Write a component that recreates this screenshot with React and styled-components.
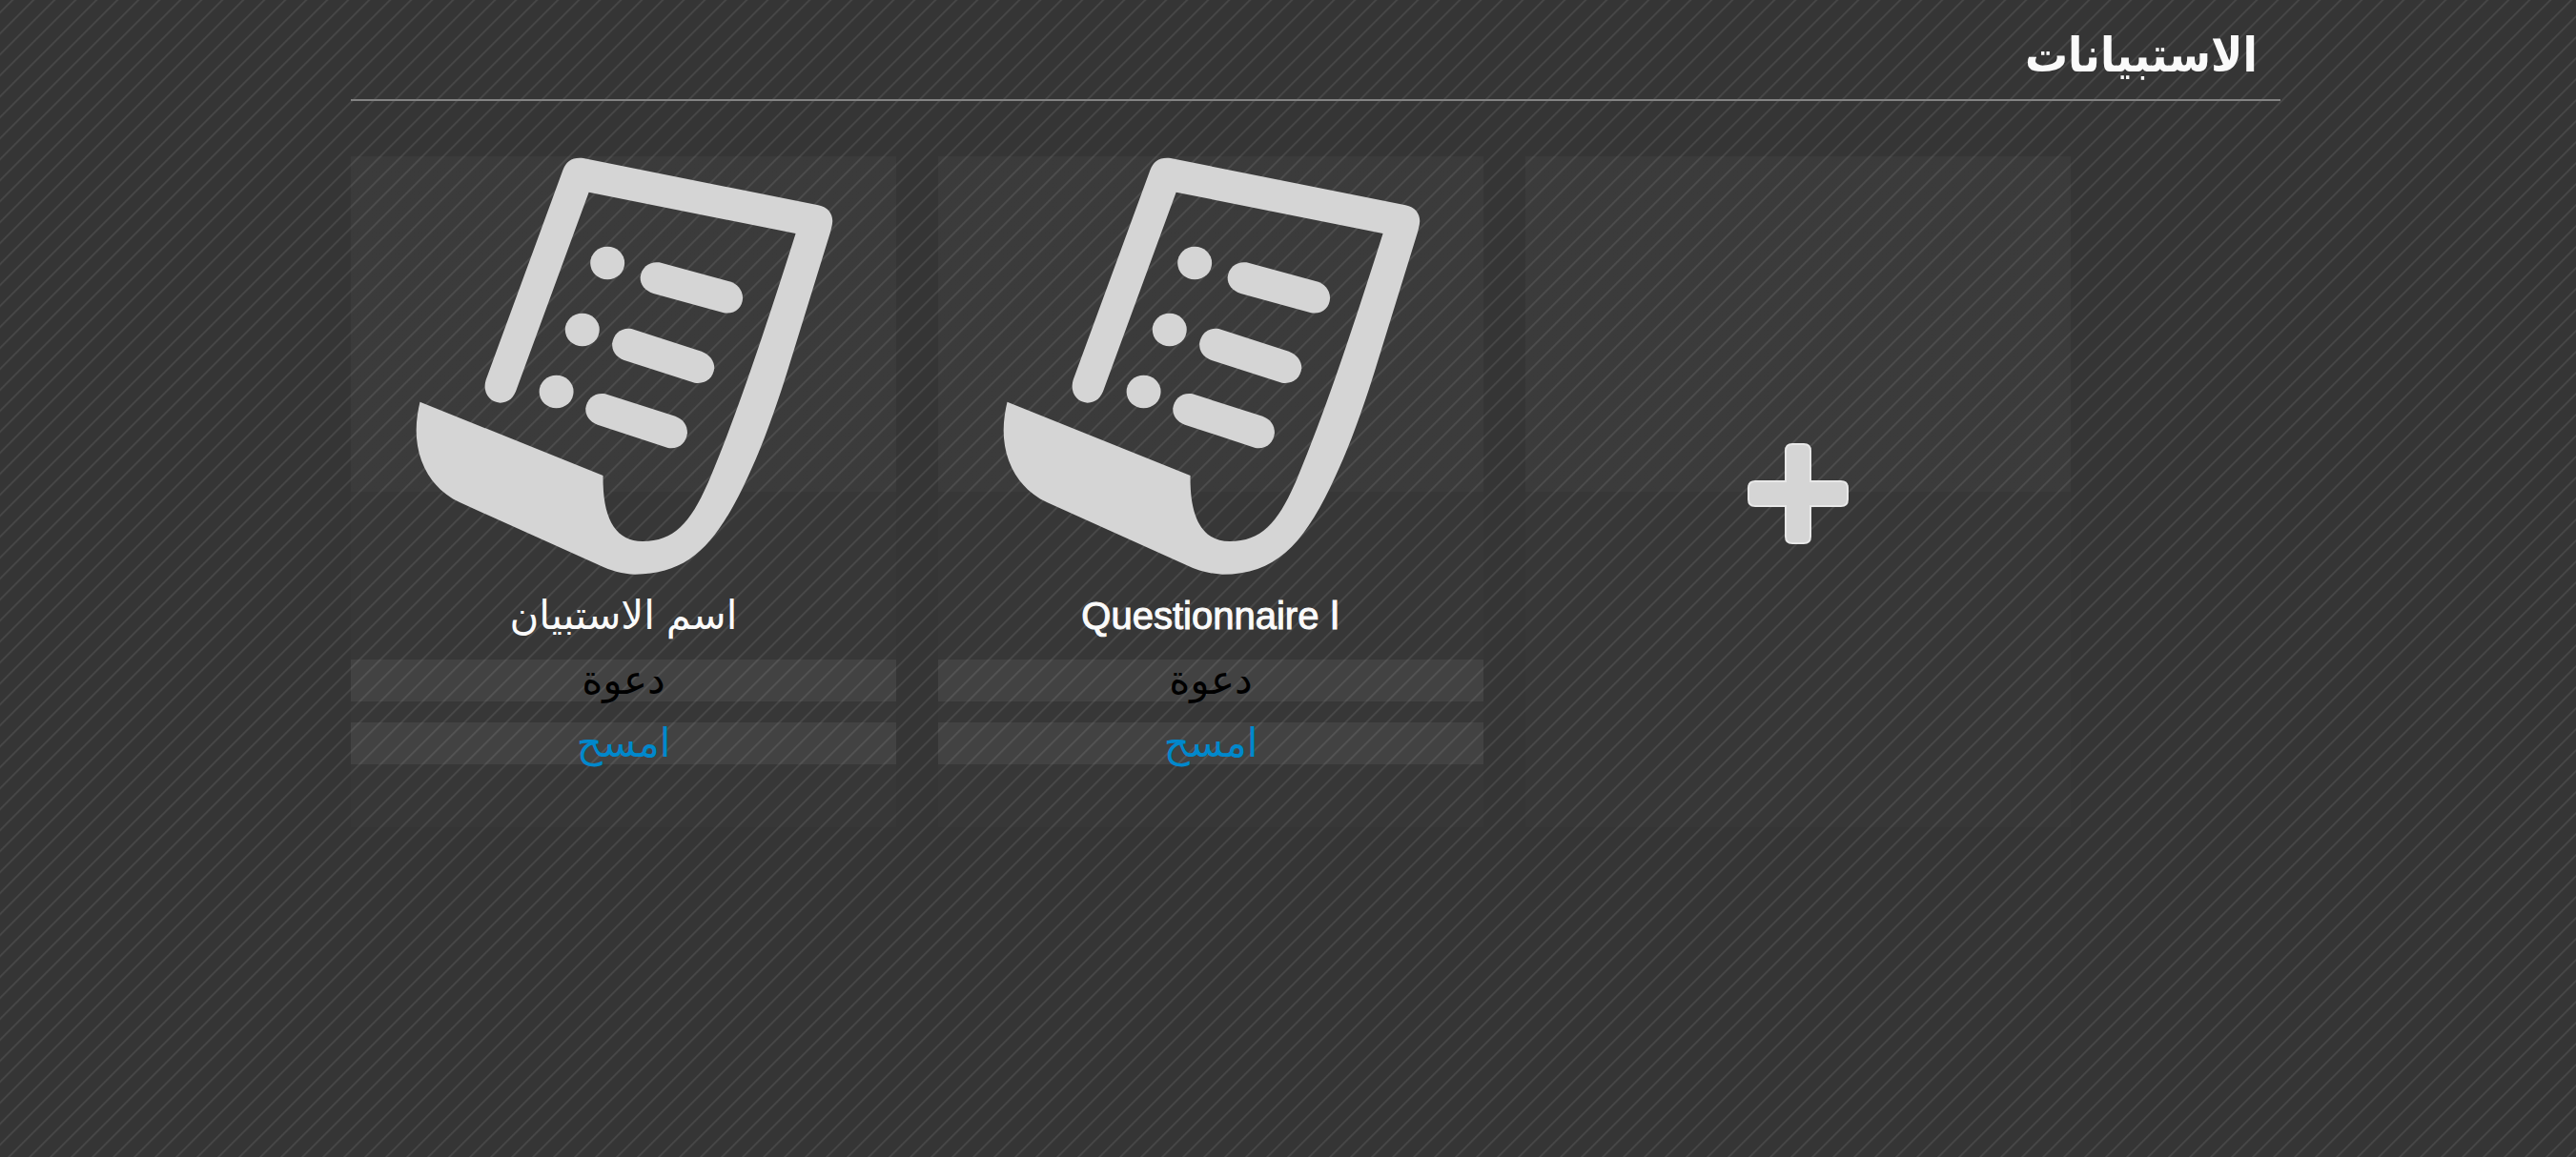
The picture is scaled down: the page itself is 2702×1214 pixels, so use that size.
import React from "react";
import styled, { createGlobalStyle } from "styled-components";

const GlobalStyle = createGlobalStyle`
  * { box-sizing: border-box; }

  body {
    margin: 0;
    min-height: 100vh;
    color: #fafafa;
    font-family: "Liberation Sans", "DejaVu Sans", sans-serif;
    background-color: #353535;
    background-image: linear-gradient(
      135deg,
      #353535 25%, #474747 29%, #474747 31%, #353535 35%,
      #353535 75%, #474747 79%, #474747 81%, #353535 85%
    );
    background-size: 22px 22px;
  }
`;

const Page = styled.div`
  padding: 0 310px 0 368px;
`;

const Header = styled.header`
  display: flex;
  align-items: flex-end;
  justify-content: flex-end;
  height: 106px;
  padding-right: 24px;
  border-bottom: 2px solid #838383;
`;

const Heading = styled.h1`
  margin: 0;
  font-family: "DejaVu Sans Condensed", "DejaVu Sans", sans-serif;
  font-size: 50px;
  font-weight: 700;
  line-height: 92px;
  white-space: nowrap;
`;

const Cards = styled.main`
  display: grid;
  grid-template-columns: repeat(auto-fill, 572px);
  gap: 44px;
  padding: 58px 0;
`;

const Card = styled.article`
  display: flex;
  flex-direction: column;
  height: 704px;
  background-color: rgba(255, 255, 255, 0.01);
  background-image: linear-gradient(rgba(255, 255, 255, 0.02), rgba(255, 255, 255, 0.02));
  background-size: 100% 50%;
  background-repeat: no-repeat;
`;

const Sheet = styled.svg`
  display: block;
  width: 440px;
  height: 440px;
  margin: 0 auto;
  fill: #d5d5d5;
`;

const Title = styled.h2`
  margin: 0;
  padding-bottom: 4px;
  font-family: "Liberation Sans", "DejaVu Sans", sans-serif;
  font-size: ${(p) => (p.$latin ? "40px" : "42px")};
  font-weight: 400;
  line-height: 84px;
  text-align: center;
  -webkit-text-stroke: ${(p) => (p.$latin ? "1px" : "0")} #fafafa;
`;

const Actions = styled.div`
  display: flex;
  flex-direction: column;
  gap: 22px;
`;

const Action = styled.button`
  height: 44px;
  padding: 0;
  border: 0;
  background: rgba(255, 255, 255, 0.06);
  color: ${(p) => (p.$danger ? "#0088cc" : "#000000")};
  font-family: "DejaVu Sans", sans-serif;
  font-size: 42px;
  line-height: 40px;
  cursor: pointer;
`;

const AddButton = styled.button`
  display: flex;
  flex: 1;
  align-items: center;
  justify-content: center;
  padding: 4px 0 0;
  border: 0;
  background: none;
  cursor: pointer;
`;

const Plus = styled.svg`
  width: 108px;
  height: 108px;
  fill: #d5d5d5;
  stroke: #e8e8e8;
  stroke-width: 2;
`;

function SheetIcon() {
  return (
    <Sheet viewBox="193 42 1150 1320" preserveAspectRatio="none" aria-hidden="true">
      <path d="M602 85C611 57 628 44 658 48L1302 196C1328 202 1341 222 1341 246C1340 262 1337 272 1334 285L1225 690C1180 858 1142 975 1095 1085C1018 1265 945 1358 800 1358C765 1356 735 1347 700 1328L320 1132C240 1090 200 1000 200 905C200 870 205 840 210 815L712 1047C710 1180 745 1254 820 1254C910 1254 955 1190 1004 1058C1080 850 1150 610 1240 285L673 155L476 772C468 802 453 818 430 818C405 816 388 795 388 765C389 750 392 742 395 733Z" />
      <ellipse cx="724" cy="378" rx="47" ry="52" />
      <ellipse cx="655" cy="588" rx="47" ry="52" />
      <ellipse cx="584" cy="783" rx="47" ry="52" />
      <path d="M1058 436C1080 443 1094 462 1095 488C1094 517 1074 540 1043 535L850 474C826 464 814 447 814 423C817 392 838 372 866 376Z" />
      <path d="M982 656C1004 666 1017 685 1017 709C1014 740 994 760 963 755L768 683C746 673 736 654 737 631C741 600 762 580 790 585Z" />
      <path d="M910 860C932 870 943 888 943 913C940 945 920 965 890 960L697 887C674 877 664 858 664 836C668 804 689 785 718 790Z" />
    </Sheet>
  );
}

const questionnaires = [
  { title: "اسم الاستبيان", dir: "rtl" },
  { title: "Questionnaire ا", dir: "ltr", latin: true },
];

export default function App() {
  return (
    <>
      <GlobalStyle />
      <Page lang="ar">
        <Header>
          <Heading dir="rtl">الاستبيانات</Heading>
        </Header>
        <Cards>
          {questionnaires.map((q) => (
            <Card key={q.title}>
              <SheetIcon />
              <Title dir={q.dir} $latin={q.latin}>{q.title}</Title>
              <Actions>
                <Action type="button">دعوة</Action>
                <Action type="button" $danger>امسح</Action>
              </Actions>
            </Card>
          ))}
          <Card>
            <AddButton type="button" aria-label="+">
              <Plus viewBox="0 0 108 108" aria-hidden="true">
                <path d="M48 2H60Q67 2 67 9V41H99Q106 41 106 48V60Q106 67 99 67H67V99Q67 106 60 106H48Q41 106 41 99V67H9Q2 67 2 60V48Q2 41 9 41H41V9Q41 2 48 2Z" />
              </Plus>
            </AddButton>
          </Card>
        </Cards>
      </Page>
    </>
  );
}
